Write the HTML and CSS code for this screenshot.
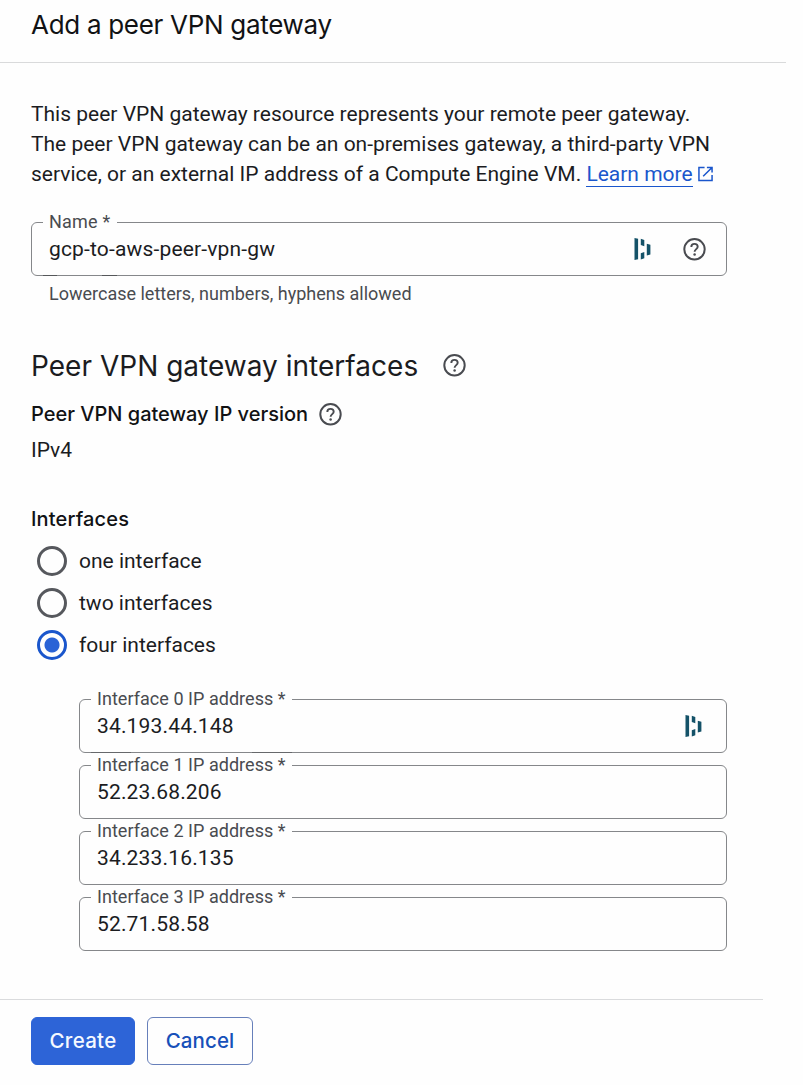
FILE: index.html
```html
<!DOCTYPE html>
<html lang="en">
<head>
<meta charset="utf-8">
<title>Add a peer VPN gateway</title>
<link rel="stylesheet" href="styles.css">
</head>
<body>
<svg class="defs" width="0" height="0">
  <symbol id="help" viewBox="0 0 24 24"><circle cx="11.5" cy="12.3" r="10.2" fill="none" stroke="currentColor" stroke-width="2"/><path d="M8.300 10c0-1.900 1.400-3.100 3.200-3.100s3.200 1.200 3.200 2.900c0 2.200-3.100 2.500-3.100 5" fill="none" stroke="currentColor" stroke-width="1.900"/><circle cx="11.600" cy="17.400" r="1.25" fill="currentColor"/></symbol>
  <symbol id="vault" viewBox="0 0 16 22"><path d="M0 0l3.600 .8V21.300l-3.600 .7zM6.300 .8l3.500 1.300V8.200l-3.500-1.300zM6.300 15.200l3.500-1.200V20.200l-3.500 1.200zM12.300 5.800l3.600 1V16.600l-3.600 1z" fill="currentColor"/></symbol>
</svg>
<header class="header"><h1 class="title">Add a peer VPN gateway</h1></header>
<main class="content">
  <p class="intro">This peer VPN gateway resource represents your remote peer gateway.<br>The peer VPN gateway can be an on-premises gateway, a third-party VPN<br>service, or an external IP address of a Compute Engine VM. <a class="link" href="#">Learn more</a><svg class="external" viewBox="0 0 16 16"><path d="M7 1H1v14h14V9M9.500 1H15v5.500M15 1L5.500 10.500" fill="none" stroke="currentColor" stroke-width="1.600"/></svg></p>
  <fieldset class="field name-field">
    <legend class="label">Name<span class="star"> *</span></legend>
    <div class="value">gcp-to-aws-peer-vpn-gw</div>
    <svg class="vault"><use href="#vault"/></svg>
    <svg class="help"><use href="#help"/></svg>
  </fieldset>
  <p class="hint">Lowercase letters, numbers, hyphens allowed</p>
  <div class="heading-row"><h2 class="section-title">Peer VPN gateway interfaces</h2><svg class="help"><use href="#help"/></svg></div>
  <div class="version-row"><h3 class="subtitle version-title">Peer VPN gateway IP version</h3><svg class="help"><use href="#help"/></svg></div>
  <p class="version">IPv4</p>
  <h3 class="subtitle interfaces-title">Interfaces</h3>
  <div class="radios">
    <label class="option"><span class="radio"></span><span>one interface</span></label>
    <label class="option"><span class="radio"></span><span>two interfaces</span></label>
    <label class="option"><span class="radio checked"></span><span>four interfaces</span></label>
  </div>
  <div class="addresses">
    <fieldset class="field first-address"><legend class="label">Interface 0 IP address *</legend><div class="value">34.193.44.148</div><svg class="vault"><use href="#vault"/></svg></fieldset>
    <fieldset class="field"><legend class="label">Interface 1 IP address *</legend><div class="value">52.23.68.206</div></fieldset>
    <fieldset class="field"><legend class="label">Interface 2 IP address *</legend><div class="value">34.233.16.135</div></fieldset>
    <fieldset class="field"><legend class="label">Interface 3 IP address *</legend><div class="value">52.71.58.58</div></fieldset>
  </div>
</main>
<footer class="footer"><button class="button primary">Create</button><button class="button">Cancel</button></footer>
</body>
</html>
```
FILE: styles.css
```css
* { box-sizing: border-box; }
body { margin: 0; background: #fefefe; color: #1b1c1f; font: 21px/30px Roboto, sans-serif; }
h1, h2, h3, p { margin: 0; }
.defs { position: absolute; }
.header { width: 786px; height: 63px; padding: 5px 31px 0; border-bottom: 1px solid #d9dadb; }
.title { font: 400 26px/40px Inter, sans-serif; letter-spacing: -.3px; color: #111214; }
.content { width: 727px; padding: 36px 0 0 31px; }
.intro { white-space: nowrap; }
.link { color: #1a56cc; text-decoration: none; display: inline-block; height: 28px; border-bottom: 1px solid #1a56cc; vertical-align: top; }
.external { width: 15px; height: 16px; color: #1a56cc; margin-left: 5px; vertical-align: -1px; }
.field { position: relative; min-width: 0; height: 64px; margin: 0; padding: 0 19px 0 11px; border: 1px solid #85878a; border-radius: 6px; display: flex; align-items: center; }
.name-field { margin-top: 23px; }
.label { height: 21px; padding: 0 6px; font-size: 18px; line-height: 19px; color: #494b50; letter-spacing: .04px; }
.name-field .label { padding-right: 7px; letter-spacing: .2px; }
.star { white-space: pre; }
.value { flex: 1; padding: 0 0 10px 6px; line-height: 34px; letter-spacing: .16px; }
.help { width: 24px; height: 24px; flex: none; color: #494b50; }
.vault { width: 17px; height: 22px; flex: none; color: #145268; }
.field .help, .field .vault { margin-bottom: 10px; }
.name-field .help { margin-left: 32px; }
.first-address { padding-right: 24px; }
.name-field::after, .first-address::after { content: ""; position: absolute; bottom: -1px; left: 11px; width: 74px; height: 1px; background: linear-gradient(90deg, #55575a 14px, transparent 14px 59px, #55575a 59px); }
.first-address::after { width: 201px; background: linear-gradient(90deg, #66686b 40px, transparent 40px 161px, #66686b 161px); }
.hint { padding-left: 18px; margin-top: 3px; font-size: 18px; color: #494b50; }
.heading-row { display: flex; align-items: center; gap: 25px; height: 40px; margin-top: 36px; }
.section-title { font: 400 28px/40px Inter, sans-serif; color: #1b1c1f; letter-spacing: .02px; padding-top: 1px; }
.version-row { display: flex; align-items: center; gap: 11px; height: 30px; margin-top: 14px; }
.subtitle { font: 500 20px/30px Inter, sans-serif; letter-spacing: 0; color: #111214; }
.version { margin-top: 6px; }
.interfaces-title { margin-top: 39px; letter-spacing: .15px; }
.radios { margin-top: 6px; padding-left: 6px; }
.option { display: flex; align-items: center; gap: 12px; height: 42px; }
.radio { width: 30px; height: 30px; border: 3px solid #56585d; border-radius: 50%; }
.radio.checked { border-color: #1a56cc; background: radial-gradient(circle, #2a63d6 7px, transparent 8px); }
.addresses { display: grid; gap: 2px; margin-top: 23px; padding-left: 48px; }
.footer { display: flex; gap: 12px; width: 763px; margin-top: 48px; padding: 17px 31px; border-top: 1px solid #dadbdd; }
.button { height: 48px; width: 106px; padding: 0; border: 1px solid #667fba; border-radius: 6px; background: #fefefe; color: #1750b9; font: 500 20.5px/46px Inter, sans-serif; letter-spacing: .1px; }
.primary { width: 104px; background: #2d64d7; border-color: #2d64d7; color: #f5f9ff; letter-spacing: .3px; }
```
